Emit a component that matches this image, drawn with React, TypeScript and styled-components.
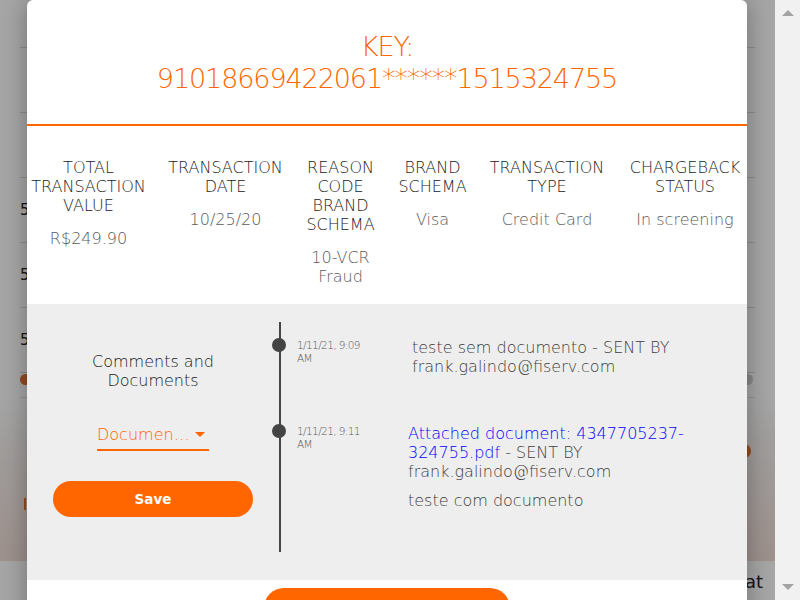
import React from "react";
import styled, { createGlobalStyle } from "styled-components";

const GlobalStyle = createGlobalStyle`
  html, body { margin: 0; padding: 0; overflow: hidden; background: #fff; }
  body { font-family: "DejaVu Sans", "Noto Sans", sans-serif; }
  * { box-sizing: border-box; }
`;

const Screen = styled.div`
  display: flex;
  width: 800px;
  height: 600px;
  overflow: hidden;
`;

const Page = styled.div`
  position: relative;
  flex: 1;
  height: 600px;
  overflow: hidden;
  background: #fff;
`;

/* ---------- background page (under the overlay) ---------- */
const BgContent = styled.div`
  display: flex;
  flex-direction: column;
  height: 100%;
  padding-top: 47px;
`;

const BgRow = styled.div<{ $h: number }>`
  height: ${(p) => p.$h}px;
  margin: 0 20px;
  border-top: 1px solid #d9d9d9;
  display: flex;
  align-items: center;
  justify-content: space-between;
  font-size: 15px;
  color: #222;
`;

const SliderRow = styled.div`
  height: 26px;
  margin: 0 20px;
  border-top: 1px solid #d9d9d9;
  border-bottom: 1px solid #e4e4e4;
  display: flex;
  align-items: flex-start;
  justify-content: space-between;
  padding: 1px 2px 0 0;
`;

const Knob = styled.span<{ $c: string }>`
  width: 11px;
  height: 11px;
  border-radius: 50%;
  background: ${(p) => p.$c};
`;

const BgPanel = styled.div`
  flex: 1;
  background: linear-gradient(#ffffff, #f6f2f0 30%, #f2dfd8);
  display: flex;
  justify-content: space-between;
  align-items: flex-start;
  padding: 46px 24px 0 24px;
`;

const BgMark = styled.span<{ $top: number }>`
  margin-top: ${(p) => p.$top}px;
  width: 2px;
  height: 12px;
  background: #e2742e;
`;

const BgPill = styled.span`
  width: 30px;
  height: 14px;
  border-radius: 7px;
  background: #e2742e;
`;

const BgFooter = styled.div`
  height: 39px;
  background: #ffffff;
  display: flex;
  align-items: center;
  justify-content: flex-end;
  padding: 2px 12px 0 0;
  font-size: 18px;
  color: #222;
`;

/* ---------- scrollbar ---------- */
const Scrollbar = styled.div`
  width: 25px;
  height: 600px;
  background: #f1f1f1;
  display: flex;
  flex-direction: column;
  justify-content: space-between;
  align-items: center;
  padding: 10px 0 10px 1px;
`;

const Arrow = styled.span<{ $up?: boolean }>`
  width: 0;
  height: 0;
  border-left: 6px solid transparent;
  border-right: 6px solid transparent;
  ${(p) =>
    p.$up ? "border-bottom: 6px solid #a3a3a3;" : "border-top: 6px solid #a3a3a3;"}
`;

/* ---------- overlay + modal ---------- */
const Overlay = styled.div`
  position: absolute;
  inset: 0;
  background: rgba(0, 0, 0, 0.35);
  display: flex;
  align-items: flex-start;
  padding-left: 27px;
`;

const Modal = styled.div`
  width: 720px;
  background: #fff;
  border-radius: 6px 6px 0 0;
  box-shadow: 0 0 26px rgba(0, 0, 0, 0.32);
  font-weight: 300;
`;

const Header = styled.div`
  padding: 31px 0 29px;
  text-align: center;
  color: #ff6600;
  font-size: 27px;
  line-height: 32px;
  letter-spacing: -1.1px;
  border-bottom: 2px solid #ff6600;
`;

const TitleLine = styled.div``;

const InfoGrid = styled.div`
  display: grid;
  grid-template-columns: 117px 117px 73px 71px 118px 118px;
  column-gap: 20px;
  padding: 32px 0 18px 3px;
  text-align: center;
`;

const InfoCol = styled.div`
  display: flex;
  flex-direction: column;
  align-items: center;
`;

const InfoLabel = styled.div`
  font-size: 16px;
  line-height: 19px;
  color: #222;
  text-transform: uppercase;
`;

const InfoValue = styled.div`
  margin-top: 14px;
  font-size: 16px;
  line-height: 19px;
  color: #5a5a5a;
`;

const GraySection = styled.div`
  height: 276px;
  background: #eeeeee;
  display: flex;
`;

const LeftCol = styled.div`
  width: 252px;
  display: flex;
  flex-direction: column;
  align-items: center;
  padding-top: 48px;
`;

const CommentsTitle = styled.div`
  max-width: 132px;
  text-align: center;
  font-size: 16px;
  line-height: 19px;
  color: #222;
`;

const Select = styled.div`
  margin-top: 35px;
  width: 112px;
  display: flex;
  align-items: center;
  justify-content: space-between;
  padding-bottom: 5px;
  border-bottom: 2px solid #ff6600;
  color: #ff6600;
`;

const SelectText = styled.span`
  max-width: 94px;
  overflow: hidden;
  white-space: nowrap;
  text-overflow: ellipsis;
  font-size: 16px;
  line-height: 19px;
`;

const Caret = styled.span`
  width: 0;
  height: 0;
  margin-right: 4px;
  border-left: 5px solid transparent;
  border-right: 5px solid transparent;
  border-top: 5px solid #ff6600;
`;

const SaveButton = styled.button`
  margin-top: 30px;
  width: 200px;
  height: 36px;
  border: none;
  border-radius: 18px;
  background: #ff6600;
  color: #fff;
  font-family: "DejaVu Sans", sans-serif;
  font-weight: 700;
  font-size: 13.5px;
`;

const Timeline = styled.div`
  flex: 1;
  margin: 18px 0 28px;
  border-left: 2px solid #444;
  padding-top: 16px;
  display: flex;
  flex-direction: column;
  gap: 48px;
`;

const Entry = styled.div`
  position: relative;
  display: flex;
  align-items: flex-start;
  padding-left: 16px;
`;

const Dot = styled.span`
  position: absolute;
  left: -9px;
  top: 0px;
  width: 14px;
  height: 14px;
  border-radius: 50%;
  background: #444;
`;

const DateText = styled.div`
  width: 76px;
  margin-top: 1px;
  font-size: 10.5px;
  line-height: 13px;
  letter-spacing: -0.6px;
  color: #555;
`;

const Message = styled.div<{ $offset: number }>`
  margin-left: ${(p) => p.$offset}px;
  max-width: 300px;
  font-size: 16px;
  line-height: 19px;
  color: #3e3e3e;
`;

const Paragraph = styled.p`
  margin: 0;
  & + & {
    margin-top: 10px;
  }
`;

const DocLink = styled.a`
  color: #0000ff;
  text-decoration: none;
`;

const BottomBar = styled.div`
  padding-top: 8px;
  display: flex;
  justify-content: center;
`;

const CloseButton = styled.button`
  width: 246px;
  height: 40px;
  border: none;
  border-radius: 20px;
  background: #ff6600;
  color: #fff;
  font-family: "DejaVu Sans", sans-serif;
  font-weight: 700;
  font-size: 14px;
`;

const info = [
  { label: "Total transaction value", value: "R$249.90" },
  { label: "Transaction date", value: "10/25/20" },
  { label: "Reason code brand schema", value: "10-VCR Fraud" },
  { label: "Brand schema", value: "Visa" },
  { label: "Transaction type", value: "Credit Card" },
  { label: "Chargeback status", value: "In screening" },
];

export default function App() {
  return (
    <>
      <GlobalStyle />
      <Screen>
        <Page>
          <BgContent>
            <BgRow $h={65} />
            <BgRow $h={65} />
            <BgRow $h={65}>
              <span>5</span>
            </BgRow>
            <BgRow $h={65}>
              <span>5</span>
            </BgRow>
            <BgRow $h={65}>
              <span>5</span>
            </BgRow>
            <SliderRow>
              <Knob $c="#e2742e" />
              <Knob $c="#d2d2d2" />
            </SliderRow>
            <BgPanel>
              <BgMark $top={54} />
              <BgPill />
            </BgPanel>
            <BgFooter>Chat</BgFooter>
          </BgContent>

          <Overlay>
            <Modal>
              <Header>
                <TitleLine>KEY:</TitleLine>
                <TitleLine>91018669422061******1515324755</TitleLine>
              </Header>

              <InfoGrid>
                {info.map((c) => (
                  <InfoCol key={c.label}>
                    <InfoLabel>{c.label}</InfoLabel>
                    <InfoValue>{c.value}</InfoValue>
                  </InfoCol>
                ))}
              </InfoGrid>

              <GraySection>
                <LeftCol>
                  <CommentsTitle>Comments and Documents</CommentsTitle>
                  <Select>
                    <SelectText>Documents type</SelectText>
                    <Caret />
                  </Select>
                  <SaveButton>Save</SaveButton>
                </LeftCol>

                <Timeline>
                  <Entry>
                    <Dot />
                    <DateText>1/11/21, 9:09 AM</DateText>
                    <Message $offset={39}>
                      <Paragraph>
                        teste sem documento - SENT BY frank.galindo@fiserv.com
                      </Paragraph>
                    </Message>
                  </Entry>
                  <Entry>
                    <Dot />
                    <DateText>1/11/21, 9:11 AM</DateText>
                    <Message $offset={35}>
                      <Paragraph>
                        <DocLink>Attached document: 4347705237-324755.pdf</DocLink>{" "}
                        - SENT BY frank.galindo@fiserv.com
                      </Paragraph>
                      <Paragraph>teste com documento</Paragraph>
                    </Message>
                  </Entry>
                </Timeline>
              </GraySection>

              <BottomBar>
                <CloseButton>Upload</CloseButton>
              </BottomBar>
            </Modal>
          </Overlay>
        </Page>
        <Scrollbar>
          <Arrow $up />
          <Arrow />
        </Scrollbar>
      </Screen>
    </>
  );
}
